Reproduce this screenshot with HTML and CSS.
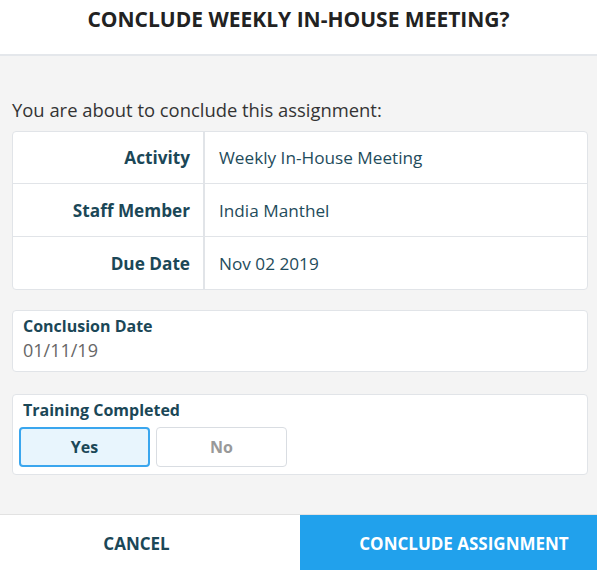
FILE: index.html
```html
<!DOCTYPE html>
<html>
<head>
<meta charset="utf-8">
<link rel="stylesheet" href="styles.css">
</head>
<body>
<div class="dialog">
  <header class="head">
    <h1 class="title">CONCLUDE WEEKLY IN-HOUSE MEETING?</h1>
  </header>
  <main class="content">
    <p class="intro">You are about to conclude this assignment:</p>
    <div class="details">
      <div class="row">
        <div class="label">Activity</div>
        <div class="value">Weekly In-House Meeting</div>
      </div>
      <div class="row">
        <div class="label">Staff Member</div>
        <div class="value">India Manthel</div>
      </div>
      <div class="row">
        <div class="label">Due Date</div>
        <div class="value">Nov 02 2019</div>
      </div>
    </div>
    <div class="field date-field">
      <div class="field-label">Conclusion Date</div>
      <div class="field-value">01/11/19</div>
    </div>
    <div class="field choice-field">
      <div class="field-label">Training Completed</div>
      <div class="choices">
        <button class="choice selected">Yes</button>
        <button class="choice">No</button>
      </div>
    </div>
  </main>
  <footer class="actions">
    <button class="action cancel">CANCEL</button>
    <button class="action primary">CONCLUDE ASSIGNMENT</button>
  </footer>
</div>
</body>
</html>
```
FILE: styles.css
```css
* { box-sizing: border-box; }
html, body { margin: 0; padding: 0; }
body {
  font-family: "Open Sans", "Noto Sans", sans-serif;
  background: #f4f4f4;
  width: 597px;
  height: 570px;
  overflow: hidden;
}
.dialog {
  display: flex;
  flex-direction: column;
  height: 570px;
}
.head {
  background: #fff;
  height: 56px;
  border-bottom: 2px solid #e4e7eb;
  padding-top: 5px;
}
.title {
  margin: 0;
  text-align: center;
  font-size: 21px;
  line-height: 28px;
  font-weight: 700;
  color: #222;
}
.content {
  flex: 1;
  padding: 0 9px 0 12px;
}
.intro {
  margin: 42px 0 9px 0;
  font-size: 18.4px;
  line-height: 24px;
  color: #333;
}
.details {
  background: #fff;
  border: 1px solid #e1e4e8;
  border-radius: 4px;
}
.row {
  display: flex;
  height: 53px;
  border-top: 1px solid #e1e4e8;
}
.row:first-child { border-top: none; height: 51px; }
.label {
  width: 192px;
  flex: none;
  border-right: 2px solid #e1e4e8;
  padding-right: 13px;
  font-weight: 700;
  font-size: 17.2px;
  color: #1b4757;
  display: flex;
  align-items: center;
  justify-content: flex-end;
}
.value {
  padding-left: 14px;
  font-size: 17.2px;
  color: #1f4c5c;
  display: flex;
  align-items: center;
}
.field {
  background: #fff;
  border: 1px solid #e1e4e8;
  border-radius: 4px;
  padding-left: 10px;
}
.date-field {
  margin-top: 20px;
  height: 62px;
  padding-top: 4px;
}
.field-label {
  font-size: 16px;
  line-height: 22px;
  font-weight: 700;
  color: #1b4757;
}
.field-value {
  font-size: 18px;
  line-height: 24px;
  color: #666;
  margin-top: 1px;
}
.choice-field {
  margin-top: 22px;
  height: 81px;
  padding-top: 4px;
}
.choices {
  display: flex;
  gap: 6px;
  margin-top: 6px;
  margin-left: -4px;
}
.choice {
  width: 131px;
  height: 40px;
  border: 1px solid #d9dde2;
  border-radius: 4px;
  background: #fff;
  font-family: inherit;
  font-size: 16px;
  font-weight: 700;
  color: #999;
  padding: 0;
}
.choice.selected {
  background: #e8f5fd;
  border: 2px solid #3aa6ee;
  color: #1b4757;
}
.actions {
  display: flex;
  height: 56px;
  border-top: 1px solid #e2e2e2;
}
.action {
  border: none;
  margin: 0;
  font-family: inherit;
  font-size: 17px;
  font-weight: 700;
  padding-top: 1px;
  padding-bottom: 0;
}
.cancel {
  width: 300px;
  background: #fff;
  color: #1b4757;
  padding-left: 0;
  padding-right: 27px;
}
.primary {
  flex: 1;
  background: #21a1ec;
  color: #fff;
  padding-left: 31px;
  padding-right: 0;
}
```
